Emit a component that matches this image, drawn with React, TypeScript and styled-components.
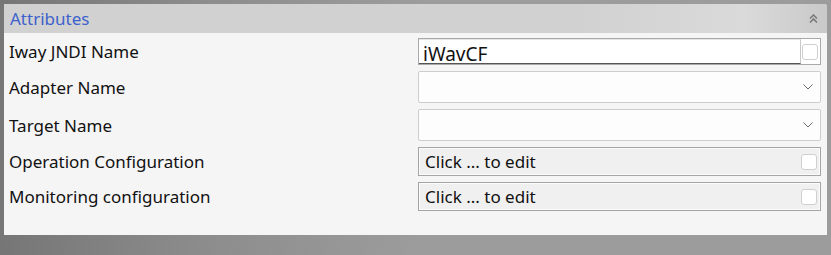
import React from "react";
import styled, { createGlobalStyle } from "styled-components";

const Global = createGlobalStyle`
  html, body { margin: 0; padding: 0; }
  body {
    width: 831px;
    height: 255px;
    overflow: hidden;
    font-family: "Noto Sans", "Open Sans", sans-serif;
  }
`;

const Page = styled.div`
  width: 831px;
  height: 255px;
  box-sizing: border-box;
  padding: 4px 4px 0 4px;
  background: linear-gradient(to right, #767676 0px, #8c8c8c 200px, #9c9c9c 420px, #9c9c9c 100%);
`;

const Panel = styled.section`
  width: 823px;
  height: 231px;
  background: #f5f5f5;
  display: flex;
  flex-direction: column;
  border-top-right-radius: 3px;
  overflow: hidden;
`;

const Header = styled.header`
  height: 29px;
  flex: none;
  display: flex;
  align-items: center;
  justify-content: space-between;
  padding: 0 9px 0 6px;
  background: linear-gradient(
    to right,
    #d1d1d1 0%,
    #d1d1d1 70%,
    #dadada 90%,
    #c9c9c9 100%
  );
`;

const Title = styled.h2`
  margin: 0;
  font-weight: 400;
  font-size: 17px;
  color: #3d62cc;
  line-height: 29px;
`;

const Body = styled.div`
  display: grid;
  grid-template-columns: 414px 403px;
  row-gap: 6px;
  padding-top: 5px;
  align-items: center;
`;

const Label = styled.div`
  padding-left: 5px;
  font-size: 17px;
  color: #111;
`;

const TextField = styled.div`
  height: 27px;
  box-sizing: border-box;
  border: 1px solid #a9a9a9;
  background: #fff;
  display: flex;
  align-items: stretch;
`;

const InnerText = styled.div`
  width: 382px;
  box-sizing: border-box;
  border-bottom: 1px solid #555;
  border-right: 1px solid #c8c8c8;
  border-top: 1px solid #e6e6e6;
  font-size: 19px;
  line-height: 28px;
  padding-left: 4px;
  color: #111;
`;

const Check = styled.span`
  width: 14px;
  height: 14px;
  border: 1px solid #cfcfcf;
  border-radius: 3px;
  background: #fff;
  flex: none;
`;

const CheckSlot = styled.div<{ $pad: number }>`
  flex: 1;
  display: flex;
  align-items: center;
  justify-content: flex-end;
  padding-right: ${(p) => p.$pad}px;
`;

const Select = styled.div`
  height: 32px;
  box-sizing: border-box;
  border: 1px solid #cdcdcd;
  border-radius: 2px;
  background: #fdfdfd;
  display: flex;
  align-items: center;
  justify-content: flex-end;
  padding-right: 7px;
`;

const EditField = styled.div<{ $h: number }>`
  height: ${(p) => p.$h}px;
  box-sizing: border-box;
  border: 1px solid #a5a5a5;
  box-shadow: inset 0 0 0 1px #fbfbfb;
  background: #f0f0f0;
  display: flex;
  align-items: center;
  justify-content: space-between;
  padding: 0 3px 0 6px;
  font-size: 17px;
  color: #111;
`;

const Chevron = () => (
  <svg width="10" height="6" viewBox="0 0 10 6">
    <path d="M0.5 0.5 L5 5 L9.5 0.5" fill="none" stroke="#6a6a6a" strokeWidth="1" />
  </svg>
);

const DoubleUp = () => (
  <svg width="9" height="9" viewBox="0 0 9 9">
    <path d="M1 4.5 L4.5 1 L8 4.5" fill="none" stroke="#7a7a7a" strokeWidth="1.6" />
    <path d="M1 8.5 L4.5 5 L8 8.5" fill="none" stroke="#7a7a7a" strokeWidth="1.6" />
  </svg>
);

export default function App() {
  return (
    <>
      <Global />
      <Page>
        <Panel>
          <Header>
            <Title>Attributes</Title>
            <DoubleUp />
          </Header>
          <Body>
            <Label>Iway JNDI Name</Label>
            <TextField>
              <InnerText>iWavCF</InnerText>
              <CheckSlot $pad={2}>
                <Check />
              </CheckSlot>
            </TextField>

            <Label>Adapter Name</Label>
            <Select>
              <Chevron />
            </Select>

            <Label>Target Name</Label>
            <Select>
              <Chevron />
            </Select>

            <Label>Operation Configuration</Label>
            <EditField $h={29}>
              <span>Click ... to edit</span>
              <Check />
            </EditField>

            <Label>Monitoring configuration</Label>
            <EditField $h={29}>
              <span>Click ... to edit</span>
              <Check />
            </EditField>
          </Body>
        </Panel>
      </Page>
    </>
  );
}
